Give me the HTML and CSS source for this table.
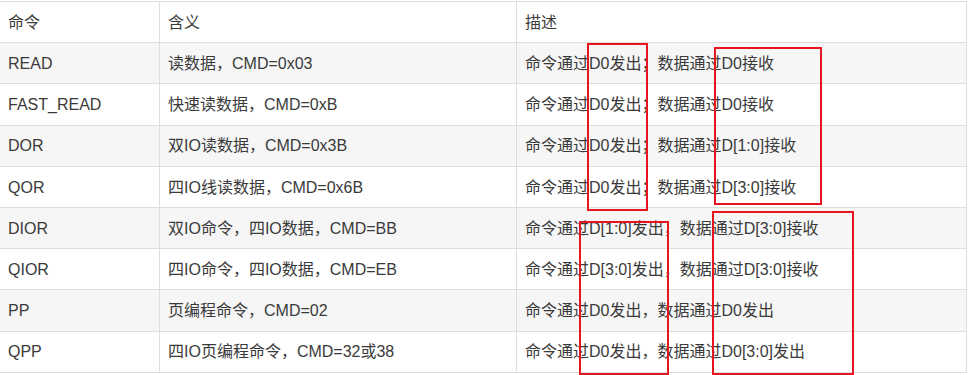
FILE: index.html
```html
<!DOCTYPE html>
<html lang="zh-CN">
<head>
<meta charset="utf-8">
<link rel="stylesheet" href="styles.css">
</head>
<body>
<div class="wrap">
  <table class="cmd-table">
    <colgroup>
      <col class="c1"><col class="c2"><col class="c3">
    </colgroup>
    <thead>
      <tr><th>命令</th><th>含义</th><th>描述</th></tr>
    </thead>
    <tbody>
      <tr><td>READ</td><td>读数据，CMD=0x03</td><td>命令通过D0发出；数据通过D0接收</td></tr>
      <tr><td>FAST_READ</td><td>快速读数据，CMD=0xB</td><td>命令通过D0发出；数据通过D0接收</td></tr>
      <tr><td>DOR</td><td>双IO读数据，CMD=0x3B</td><td>命令通过D0发出；数据通过D[1:0]接收</td></tr>
      <tr><td>QOR</td><td>四IO线读数据，CMD=0x6B</td><td>命令通过D0发出；数据通过D[3:0]接收</td></tr>
      <tr><td>DIOR</td><td>双IO命令，四IO数据，CMD=BB</td><td>命令通过D[1:0]发出，数据通过D[3:0]接收</td></tr>
      <tr><td>QIOR</td><td>四IO命令，四IO数据，CMD=EB</td><td>命令通过D[3:0]发出，数据通过D[3:0]接收</td></tr>
      <tr><td>PP</td><td>页编程命令，CMD=02</td><td>命令通过D0发出，数据通过D0发出</td></tr>
      <tr><td>QPP</td><td>四IO页编程命令，CMD=32或38</td><td>命令通过D0发出，数据通过D0[3:0]发出</td></tr>
    </tbody>
  </table>
  <div class="mark m1"></div>
  <div class="mark m2"></div>
  <div class="mark m3"></div>
  <div class="mark m4"></div>
</div>
</body>
</html>
```
FILE: styles.css
```css
html, body {
  margin: 0;
  padding: 0;
  background: #fff;
}
body {
  width: 979px;
  height: 375px;
  overflow: hidden;
  font-family: "Liberation Sans", "Noto Sans CJK SC", sans-serif;
  font-size: 16px;
  color: #3a3a3a;
}
.wrap {
  position: relative;
  width: 979px;
  height: 375px;
}
.cmd-table {
  border-collapse: collapse;
  table-layout: fixed;
  width: 967px;
  margin: 1px 0 0 -1px;
}
.c1 { width: 160px; }
.c2 { width: 357px; }
.c3 { width: 450px; }
.cmd-table th,
.cmd-table td {
  border: 1px solid #ddd;
  padding: 8.8px 8px 7.4px;
  line-height: 24px;
  height: 24px;
  text-align: left;
  font-weight: normal;
  white-space: nowrap;
  vertical-align: middle;
}
.cmd-table thead th {
  background: #fff;
}
.cmd-table tbody tr:nth-child(odd) td {
  background: #f6f6f6;
}
.cmd-table tbody tr:nth-child(even) td {
  background: #fff;
}
.mark {
  position: absolute;
  border: 2px solid #e5161f;
  box-sizing: border-box;
}
.m1 { left: 587px; top: 42px; width: 61px; height: 168px; }
.m2 { left: 714px; top: 46px; width: 108px; height: 158px; }
.m3 { left: 579px; top: 220px; width: 90px; height: 154px; }
.m4 { left: 712px; top: 210px; width: 142px; height: 164px; }
```
